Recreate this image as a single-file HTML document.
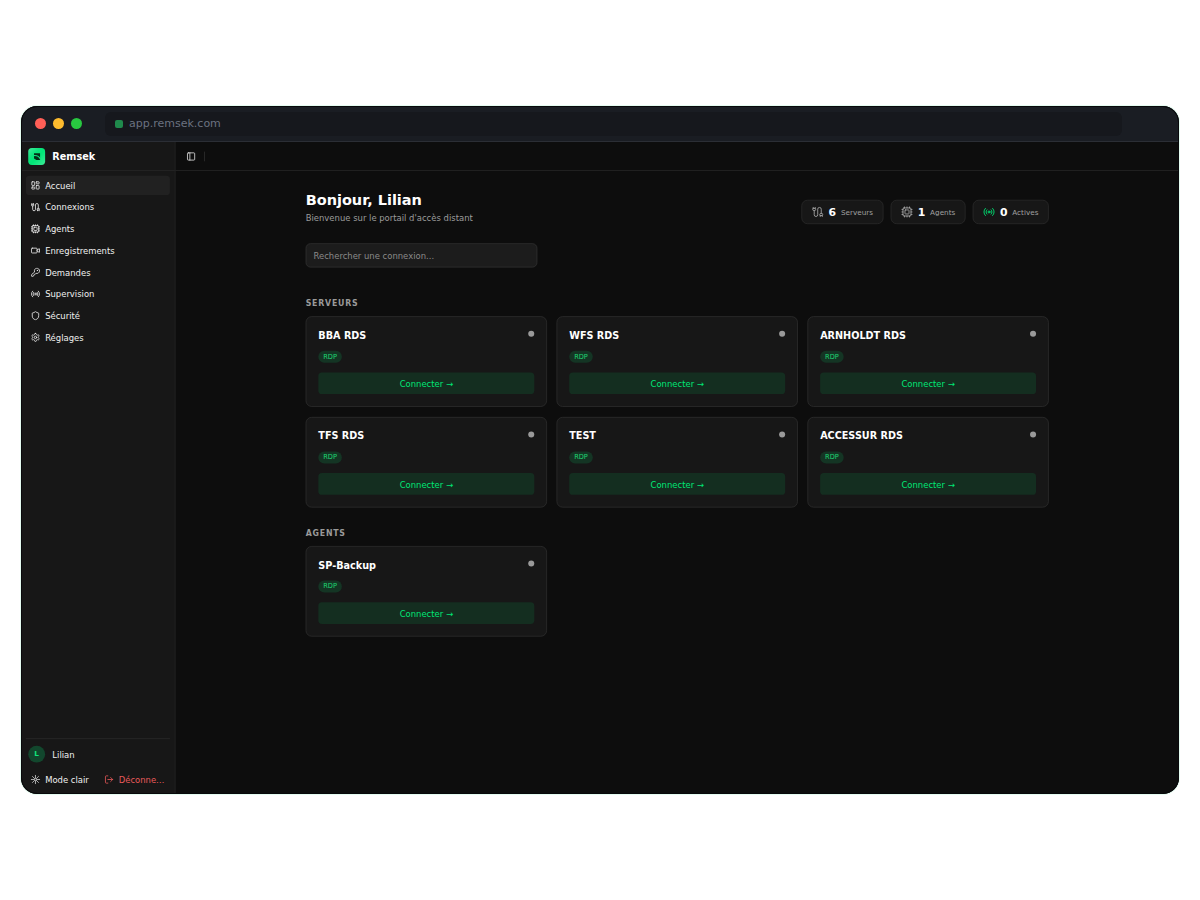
<!DOCTYPE html>
<html lang="fr">
<head>
<meta charset="utf-8">
<title>Remsek</title>
<style>
*{box-sizing:border-box;margin:0;padding:0}
html,body{width:1200px;height:900px;background:#fff;overflow:hidden}
body{font-family:"DejaVu Sans","Liberation Sans",sans-serif;position:relative}
.win{position:absolute;left:21px;top:106px;width:1158px;height:688px;border-radius:16px;overflow:hidden;background:#0d0d0d;box-shadow:0 0 0 1px rgba(0,230,118,.1)}
.ring{position:absolute;left:0;top:0;width:1158px;height:688px;border-radius:16px;border:1px solid #08090b;pointer-events:none}
.tbar{position:absolute;left:0;top:0;width:1158px;height:36px;background:#1a1d23;border-bottom:1px solid #2b2e35}
.dot{position:absolute;top:11.8px;width:11.5px;height:11.5px;border-radius:50%}
.url{position:absolute;left:84px;top:6px;width:1017px;height:24px;border-radius:6px;background:#16181d}
.url i{position:absolute;left:10px;top:8px;width:8px;height:8px;border-radius:2px;background:#1f8a4c}
.url span{position:absolute;left:24px;top:0;line-height:23px;font-size:11px;color:#6b7280}
.app{position:absolute;left:0;top:36px;width:1920px;height:1080px;transform:scale(0.603125);transform-origin:0 0;background:#0d0d0d;color:#fafafa;font-size:14px}
.side{position:absolute;left:0;top:0;width:256px;height:1080px;background:#171717;border-right:1px solid #2a2a2a}
.shead{position:absolute;left:0;top:0;width:255px;height:48px;border-bottom:1px solid #2a2a2a}
.logo{position:absolute;left:12px;top:10px;width:28px;height:28px;border-radius:6px;background:linear-gradient(135deg,#45ea9c 0%,#0be57c 35%,#00e676 55%,#3fe998 100%)}
.brand{position:absolute;left:52px;top:1.4px;line-height:48px;font-size:16px;font-weight:700;color:#fff}
.nav a{position:absolute;left:8px;width:239px;height:32px;border-radius:6px;color:#f0f0f0;font-size:14px;line-height:33.6px;padding-left:32px;text-decoration:none;white-space:nowrap}
.nav a.on{background:#212121}
.nav svg,.ic{position:absolute;left:8px;top:8px;width:16px;height:16px;fill:none;stroke:currentColor;stroke-width:2;stroke-linecap:round;stroke-linejoin:round}
.sfoot{position:absolute;left:8px;top:989px;width:239px;border-top:1px solid #303030}
.av{position:absolute;left:4px;top:11px;width:28px;height:28px;border-radius:50%;background:#12472d;color:#10e67c;font-size:12px;font-weight:700;line-height:27px;text-align:center}
.uname{position:absolute;left:44px;top:12px;line-height:28px;font-size:14px;color:#f0f0f0}
.fbtn{position:absolute;top:52px;height:32px;line-height:32px;font-size:14px;white-space:nowrap;padding-left:32px}
.fbtn svg{top:6.6px}
.top{position:absolute;left:256px;top:0;width:1664px;height:48px;border-bottom:1px solid #2e2e2e}
.main{position:absolute;left:472px;top:0;width:1232px}
h1{position:absolute;left:0;top:80px;font-size:24px;line-height:32px;font-weight:700;color:#fff;white-space:nowrap}
.sub{position:absolute;left:0;top:116.2px;font-size:14px;line-height:20px;color:#9c9c9c;white-space:nowrap}
.search{position:absolute;left:0;top:168px;width:384px;height:40px;border:1px solid #383838;border-radius:8px;background:#1c1c1c;color:#8a8a8a;font-size:14px;line-height:40.5px;padding-left:12px;white-space:nowrap}
.lbl{position:absolute;left:0;font-size:13px;line-height:16px;font-weight:700;letter-spacing:.1em;color:#9a9a9a}
.pill{position:absolute;top:96px;height:40px;border:1px solid #323232;border-radius:10px;background:#171717;white-space:nowrap}
.pill svg{position:absolute;left:16px;top:9px;width:20px;height:20px;fill:none;stroke:#a3a3a3;stroke-width:1.8;stroke-linecap:round;stroke-linejoin:round}
.pill b{position:absolute;left:44px;top:0;line-height:38px;font-size:18px;color:#fff}
.pill span{position:absolute;left:64.5px;top:0.7px;line-height:38px;font-size:12px;color:#a0a0a0}
.card{position:absolute;width:400px;height:150px;border:1px solid #363636;border-radius:10px;background:#171717}
.card h3{position:absolute;left:20px;top:20.7px;font-size:16px;line-height:22px;font-weight:700;color:#fff;white-space:nowrap}
.card i{position:absolute;right:20px;top:23.2px;width:10px;height:10px;border-radius:50%;background:#9a9a9a}
.card em{position:absolute;left:20px;top:56px;width:39px;height:20px;border-radius:10px;background:#143524;color:#1fd873;font-style:normal;font-size:11px;line-height:19px;text-align:center}
.card u{position:absolute;left:20px;top:92px;width:358px;height:36px;border-radius:6px;background:#142e20;color:#00e676;text-decoration:none;font-size:14px;line-height:38px;text-align:center}
</style>
</head>
<body>
<div class="win">
  <div class="app">
    <div class="side">
      <div class="shead">
        <div class="logo"><svg viewBox="0 0 28 28" width="28" height="28"><path d="M9.6 8.7H19.6V19.9H13.6L9.6 17.3Z" fill="#032d17"/><path d="M9 12.6C13.5 12 18 13.8 20.4 18.6" fill="none" stroke="#12e480" stroke-width="1.9"/></svg></div>
        <div class="brand">Remsek</div>
      </div>
      <div class="nav">
        <a class="on" style="top:56px;line-height:34.8px"><svg viewBox="0 0 24 24"><rect width="7" height="9" x="3" y="3" rx="1"/><rect width="7" height="5" x="14" y="3" rx="1"/><rect width="7" height="9" x="14" y="12" rx="1"/><rect width="7" height="5" x="3" y="16" rx="1"/></svg>Accueil</a>
        <a style="top:92px"><svg viewBox="0 0 24 24"><path d="M17 21v-2a1 1 0 0 1-1-1v-1a2 2 0 0 1 2-2h2a2 2 0 0 1 2 2v1a1 1 0 0 1-1 1"/><path d="M19 15V6.5a1 1 0 0 0-7 0v11a1 1 0 0 1-7 0V9"/><path d="M21 21v-2h-4"/><path d="M3 5h4V3"/><path d="M7 5a1 1 0 0 1 1 1v1a2 2 0 0 1-2 2H4a2 2 0 0 1-2-2V6a1 1 0 0 1 1-1V3"/></svg>Connexions</a>
        <a style="top:128px"><svg viewBox="0 0 24 24"><rect width="16" height="16" x="4" y="4" rx="2"/><rect width="8" height="8" x="8" y="8" rx="1"/><path d="M12 20v2M12 2v2M17 20v2M17 2v2M2 12h2M2 17h2M2 7h2M20 12h2M20 17h2M20 7h2M7 20v2M7 2v2"/></svg>Agents</a>
        <a style="top:164px"><svg viewBox="0 0 24 24"><path d="m16 13 5.223 3.482a.5.5 0 0 0 .777-.416V7.87a.5.5 0 0 0-.752-.432L16 10.5"/><rect x="2" y="6" width="14" height="12" rx="2"/></svg>Enregistrements</a>
        <a style="top:200px;line-height:35.2px"><svg viewBox="0 0 24 24"><path d="M2.586 17.414A2 2 0 0 0 2 18.828V21a1 1 0 0 0 1 1h3a1 1 0 0 0 1-1v-1a1 1 0 0 1 1-1h1a1 1 0 0 0 1-1v-1a1 1 0 0 1 1-1h.172a2 2 0 0 0 1.414-.586l.814-.814a6.5 6.5 0 1 0-4-4z"/><circle cx="16.5" cy="7.5" r=".5" fill="currentColor"/></svg>Demandes</a>
        <a style="top:236px"><svg viewBox="0 0 24 24"><path d="M4.9 19.1C1 15.2 1 8.8 4.9 4.9"/><path d="M7.8 16.2c-2.3-2.3-2.3-6.1 0-8.5"/><circle cx="12" cy="12" r="2"/><path d="M16.2 7.8c2.3 2.3 2.3 6.1 0 8.5"/><path d="M19.1 4.9C23 8.8 23 15.1 19.1 19"/></svg>Supervision</a>
        <a style="top:272px"><svg viewBox="0 0 24 24"><path d="M20 13c0 5-3.5 7.5-7.66 8.95a1 1 0 0 1-.67-.01C7.5 20.5 4 18 4 13V6a1 1 0 0 1 1-1c2 0 4.5-1.2 6.24-2.72a1.17 1.17 0 0 1 1.52 0C14.51 3.81 17 5 19 5a1 1 0 0 1 1 1z"/></svg>Sécurité</a>
        <a style="top:308px;line-height:34.8px"><svg viewBox="0 0 24 24"><path d="M12.22 2h-.44a2 2 0 0 0-2 2v.18a2 2 0 0 1-1 1.73l-.43.25a2 2 0 0 1-2 0l-.15-.08a2 2 0 0 0-2.73.73l-.22.38a2 2 0 0 0 .73 2.73l.15.1a2 2 0 0 1 1 1.72v.51a2 2 0 0 1-1 1.74l-.15.09a2 2 0 0 0-.73 2.73l.22.38a2 2 0 0 0 2.73.73l.15-.08a2 2 0 0 1 2 0l.43.25a2 2 0 0 1 1 1.73V20a2 2 0 0 0 2 2h.44a2 2 0 0 0 2-2v-.18a2 2 0 0 1 1-1.73l.43-.25a2 2 0 0 1 2 0l.15.08a2 2 0 0 0 2.73-.73l.22-.39a2 2 0 0 0-.73-2.73l-.15-.08a2 2 0 0 1-1-1.74v-.5a2 2 0 0 1 1-1.74l.15-.09a2 2 0 0 0 .73-2.73l-.22-.38a2 2 0 0 0-2.73-.73l-.15.08a2 2 0 0 1-2 0l-.43-.25a2 2 0 0 1-1-1.73V4a2 2 0 0 0-2-2z"/><circle cx="12" cy="12" r="3"/></svg>Réglages</a>
      </div>
      <div class="sfoot">
        <div class="av">L</div>
        <div class="uname">Lilian</div>
        <div class="fbtn" style="left:0;color:#f0f0f0"><svg class="ic" viewBox="0 0 24 24"><path stroke-width="1.7" d="M14.60 12.00L22.60 12.00M13.84 13.84L19.50 19.50M12.00 14.60L12.00 22.60M10.16 13.84L4.50 19.50M9.40 12.00L1.40 12.00M10.16 10.16L4.50 4.50M12.00 9.40L12.00 1.40M13.84 10.16L19.50 4.50"/></svg>Mode clair</div>
        <div class="fbtn" style="left:122px;width:109px;color:#e85a5a;overflow:hidden;text-overflow:ellipsis"><svg class="ic" viewBox="0 0 24 24"><path d="M9 21H5a2 2 0 0 1-2-2V5a2 2 0 0 1 2-2h4"/><path d="m16 17 5-5-5-5"/><path d="M21 12H9"/></svg>Déconnexion</div>
      </div>
    </div>
    <div class="top">
      <svg class="ic" style="left:18px;top:16px;color:#e5e5e5" viewBox="0 0 24 24"><rect width="18" height="18" x="3" y="3" rx="2"/><path d="M9 3v18"/></svg>
      <div style="position:absolute;left:47.6px;top:16px;width:1px;height:16px;background:#3a3a3a"></div>
    </div>
    <div class="main">
      <h1>Bonjour, Lilian</h1>
      <div class="sub">Bienvenue sur le portail d'accès distant</div>
      <div class="pill" style="left:822px;width:135.75px"><svg viewBox="0 0 24 24"><path d="M17 21v-2a1 1 0 0 1-1-1v-1a2 2 0 0 1 2-2h2a2 2 0 0 1 2 2v1a1 1 0 0 1-1 1"/><path d="M19 15V6.5a1 1 0 0 0-7 0v11a1 1 0 0 1-7 0V9"/><path d="M21 21v-2h-4"/><path d="M3 5h4V3"/><path d="M7 5a1 1 0 0 1 1 1v1a2 2 0 0 1-2 2H4a2 2 0 0 1-2-2V6a1 1 0 0 1 1-1V3"/></svg><b>6</b><span>Serveurs</span></div>
      <div class="pill" style="left:969.8px;width:124.3px"><svg viewBox="0 0 24 24"><rect width="16" height="16" x="4" y="4" rx="2"/><rect width="8" height="8" x="8" y="8" rx="1"/><path d="M12 20v2M12 2v2M17 20v2M17 2v2M2 12h2M2 17h2M2 7h2M20 12h2M20 17h2M20 7h2M7 20v2M7 2v2"/></svg><b>1</b><span>Agents</span></div>
      <div class="pill" style="left:1106.1px;width:125.9px"><svg viewBox="0 0 24 24" style="stroke:#00e676"><path d="M4.9 19.1C1 15.2 1 8.8 4.9 4.9"/><path d="M7.8 16.2c-2.3-2.3-2.3-6.1 0-8.5"/><circle cx="12" cy="12" r="2"/><path d="M16.2 7.8c2.3 2.3 2.3 6.1 0 8.5"/><path d="M19.1 4.9C23 8.8 23 15.1 19.1 19"/></svg><b>0</b><span>Actives</span></div>
      <div class="search">Rechercher une connexion...</div>
      <div class="lbl" style="top:259.5px">SERVEURS</div>
      <div class="card" style="left:0;top:289px"><h3>BBA RDS</h3><i></i><em>RDP</em><u>Connecter →</u></div>
      <div class="card" style="left:416px;top:289px"><h3>WFS RDS</h3><i></i><em>RDP</em><u>Connecter →</u></div>
      <div class="card" style="left:832px;top:289px"><h3>ARNHOLDT RDS</h3><i></i><em>RDP</em><u>Connecter →</u></div>
      <div class="card" style="left:0;top:455.6px"><h3>TFS RDS</h3><i></i><em>RDP</em><u>Connecter →</u></div>
      <div class="card" style="left:416px;top:455.6px"><h3>TEST</h3><i></i><em>RDP</em><u>Connecter →</u></div>
      <div class="card" style="left:832px;top:455.6px"><h3>ACCESSUR RDS</h3><i></i><em>RDP</em><u>Connecter →</u></div>
      <div class="lbl" style="top:640.5px">AGENTS</div>
      <div class="card" style="left:0;top:670px"><h3>SP-Backup</h3><i></i><em>RDP</em><u>Connecter →</u></div>
    </div>
  </div>
  <div class="tbar">
    <div class="dot" style="left:13.8px;background:#ff5f57"></div>
    <div class="dot" style="left:31.8px;background:#febc2e"></div>
    <div class="dot" style="left:49.8px;background:#28c840"></div>
    <div class="url"><i></i><span>app.remsek.com</span></div>
  </div>
  <div class="ring"></div>
</div>
</body>
</html>
